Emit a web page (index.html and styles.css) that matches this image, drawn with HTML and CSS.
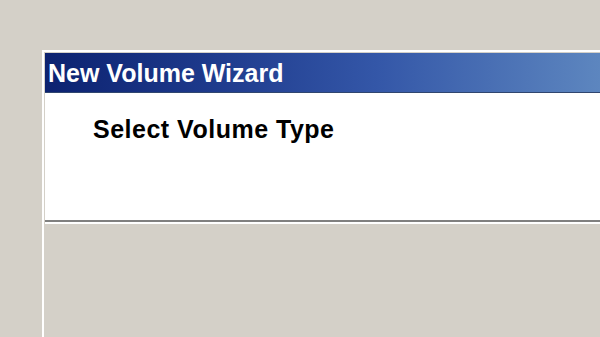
FILE: index.html
```html
<!DOCTYPE html>
<html>
<head>
<meta charset="utf-8">
<title>New Volume Wizard</title>
<link rel="stylesheet" href="styles.css">
</head>
<body>
<div class="window">
  <div class="titlebar">New Volume Wizard</div>
  <div class="header">
    <h1 class="heading">Select Volume Type</h1>
  </div>
  <div class="body"></div>
</div>
</body>
</html>
```
FILE: styles.css
```css
html, body {
  margin: 0;
  padding: 0;
  height: 100%;
  overflow: hidden;
}
body {
  background: #d4d0c8;
  font-family: "Liberation Sans", Arial, sans-serif;
}
.window {
  margin: 50px 0 0 42px;
  border-top: 2px solid #ffffff;
  border-left: 2px solid #ffffff;
  padding: 1px 0 0 1px;
  background: #d4d0c8;
  height: 284px;
}
.titlebar {
  height: 37px;
  padding: 2px 0 0 3px;
  line-height: 37px;
  background: linear-gradient(to right, #0c2270 0%, #1e3a8c 30%, #3457a8 60%, #5d86bf 100%);
  border-bottom: 1px solid #30466f;
  color: #ffffff;
  font-weight: bold;
  font-size: 25px;
  white-space: nowrap;
}
.header {
  background: #ffffff;
  height: 105px;
  padding: 22px 0 0 48px;
  border-bottom: 2px solid #808080;
}
.heading {
  margin: 0;
  font-size: 25px;
  line-height: 29px;
  font-weight: bold;
  letter-spacing: 0.5px;
  color: #000000;
  white-space: nowrap;
}
.body {
  border-top: 2px solid #ffffff;
  height: 113px;
}
```
